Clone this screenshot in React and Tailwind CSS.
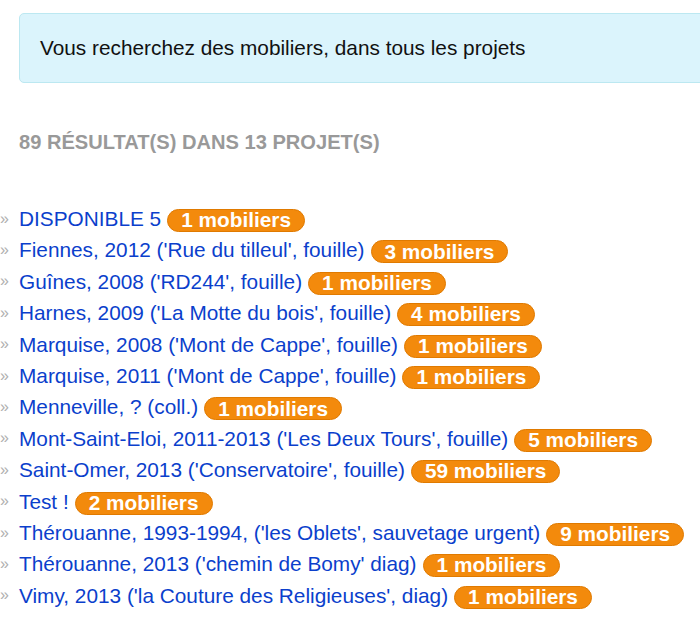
import React from 'react';

const projets = [
  { nom: 'DISPONIBLE 5', n: 1 },
  { nom: "Fiennes, 2012 ('Rue du tilleul', fouille)", n: 3 },
  { nom: "Guînes, 2008 ('RD244', fouille)", n: 1 },
  { nom: "Harnes, 2009 ('La Motte du bois', fouille)", n: 4 },
  { nom: "Marquise, 2008 ('Mont de Cappe', fouille)", n: 1 },
  { nom: "Marquise, 2011 ('Mont de Cappe', fouille)", n: 1 },
  { nom: 'Menneville, ? (coll.)', n: 1 },
  { nom: "Mont-Saint-Eloi, 2011-2013 ('Les Deux Tours', fouille)", n: 5 },
  { nom: "Saint-Omer, 2013 ('Conservatoire', fouille)", n: 59 },
  { nom: 'Test !', n: 2 },
  { nom: "Thérouanne, 1993-1994, ('les Oblets', sauvetage urgent)", n: 9 },
  { nom: "Thérouanne, 2013 ('chemin de Bomy' diag)", n: 1 },
  { nom: "Vimy, 2013 ('la Couture des Religieuses', diag)", n: 1 },
];

function Badge({ children }) {
  return (
    <span className="inline-flex items-center h-[23px] px-[13px] rounded-full border border-[#e07a00] bg-[#f38a0c] text-white font-bold text-[20.8px] leading-none whitespace-nowrap align-middle">
      {children}
    </span>
  );
}

export default function App() {
  return (
    <div className="w-[700px] h-[631px] overflow-hidden bg-white font-['Liberation_Sans',Arial,sans-serif] text-[20.8px]">
      <div className="pt-[13px] pl-[19px] -mr-[20px]">
        <div className="border border-[#bce8f1] bg-[#dbf4fc] rounded-[5px] pl-[20px] py-[20px] leading-[28px] text-[#111]">
          Vous recherchez des mobiliers, dans tous les projets
        </div>
      </div>

      <h4 className="mt-[45px] pl-[19px] font-bold uppercase text-[#999] text-[20.1px] leading-[28px]">
        89 résultat(s) dans 13 projet(s)
      </h4>

      <ul className="mt-[47px]">
        {projets.map((p) => (
          <li key={p.nom} className="flex items-center h-[31.4px] whitespace-nowrap">
            <span className="w-[19px] shrink-0 text-[#b0b0b0] text-[16px] leading-none">»</span>
            <a href="#" className="text-[#0b3fcc]">{p.nom}</a>
            <span className="ml-[6px]"><Badge>{p.n} mobiliers</Badge></span>
          </li>
        ))}
      </ul>
    </div>
  );
}
